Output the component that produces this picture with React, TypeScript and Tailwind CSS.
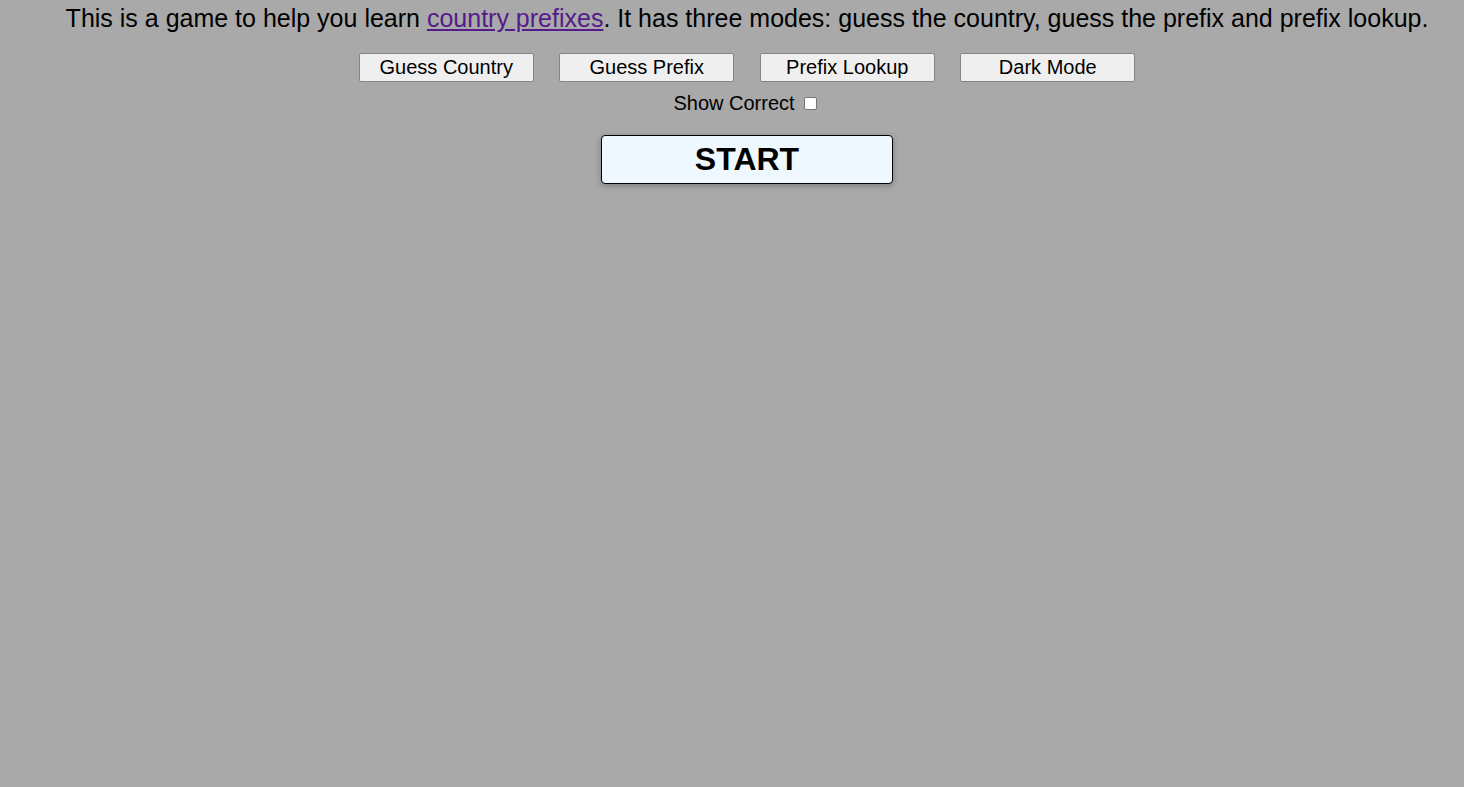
export default function App() {
  const modes = ["Guess Country", "Guess Prefix", "Prefix Lookup", "Dark Mode"];
  return (
    <div
      className="min-h-[787px] w-full bg-[#a9a9a9] pl-[30px] text-black"
      style={{ fontFamily: '"Liberation Sans", Arial, sans-serif' }}
    >
      <p className="m-0 h-[36px] text-center text-[25px] leading-[37px] whitespace-nowrap">
        This is a game to help you learn{" "}
        <a href="#" className="text-[#551a8b] underline">
          country prefixes
        </a>
        . It has three modes: guess the country, guess the prefix and prefix lookup.
      </p>
      <div className="mt-[17px] flex justify-center gap-[25.5px]">
        {modes.map((m) => (
          <button
            key={m}
            className="flex h-[29px] w-[175px] items-center justify-center rounded-[2px] border border-[#858585] bg-[#efefef] pb-[1px] text-[20px] leading-none text-black"
          >
            {m}
          </button>
        ))}
      </div>
      <div className="mt-[7px] flex h-[27px] items-center justify-center pr-[4px] text-[20px]">
        <span>Show Correct</span>
        <input
          type="checkbox"
          className="ml-[9px] mt-[1px] h-[13px] w-[13px] appearance-none rounded-[2px] border border-[#767676] bg-white"
        />
      </div>
      <div className="mt-[19px] flex justify-center">
        <button className="flex h-[49px] w-[292px] items-center justify-center rounded-[4px] border border-black bg-[#f0f8ff] pb-[1px] text-[32px] font-bold text-black shadow-[0_2px_6px_rgba(0,0,0,0.25)]">
          START
        </button>
      </div>
    </div>
  );
}
